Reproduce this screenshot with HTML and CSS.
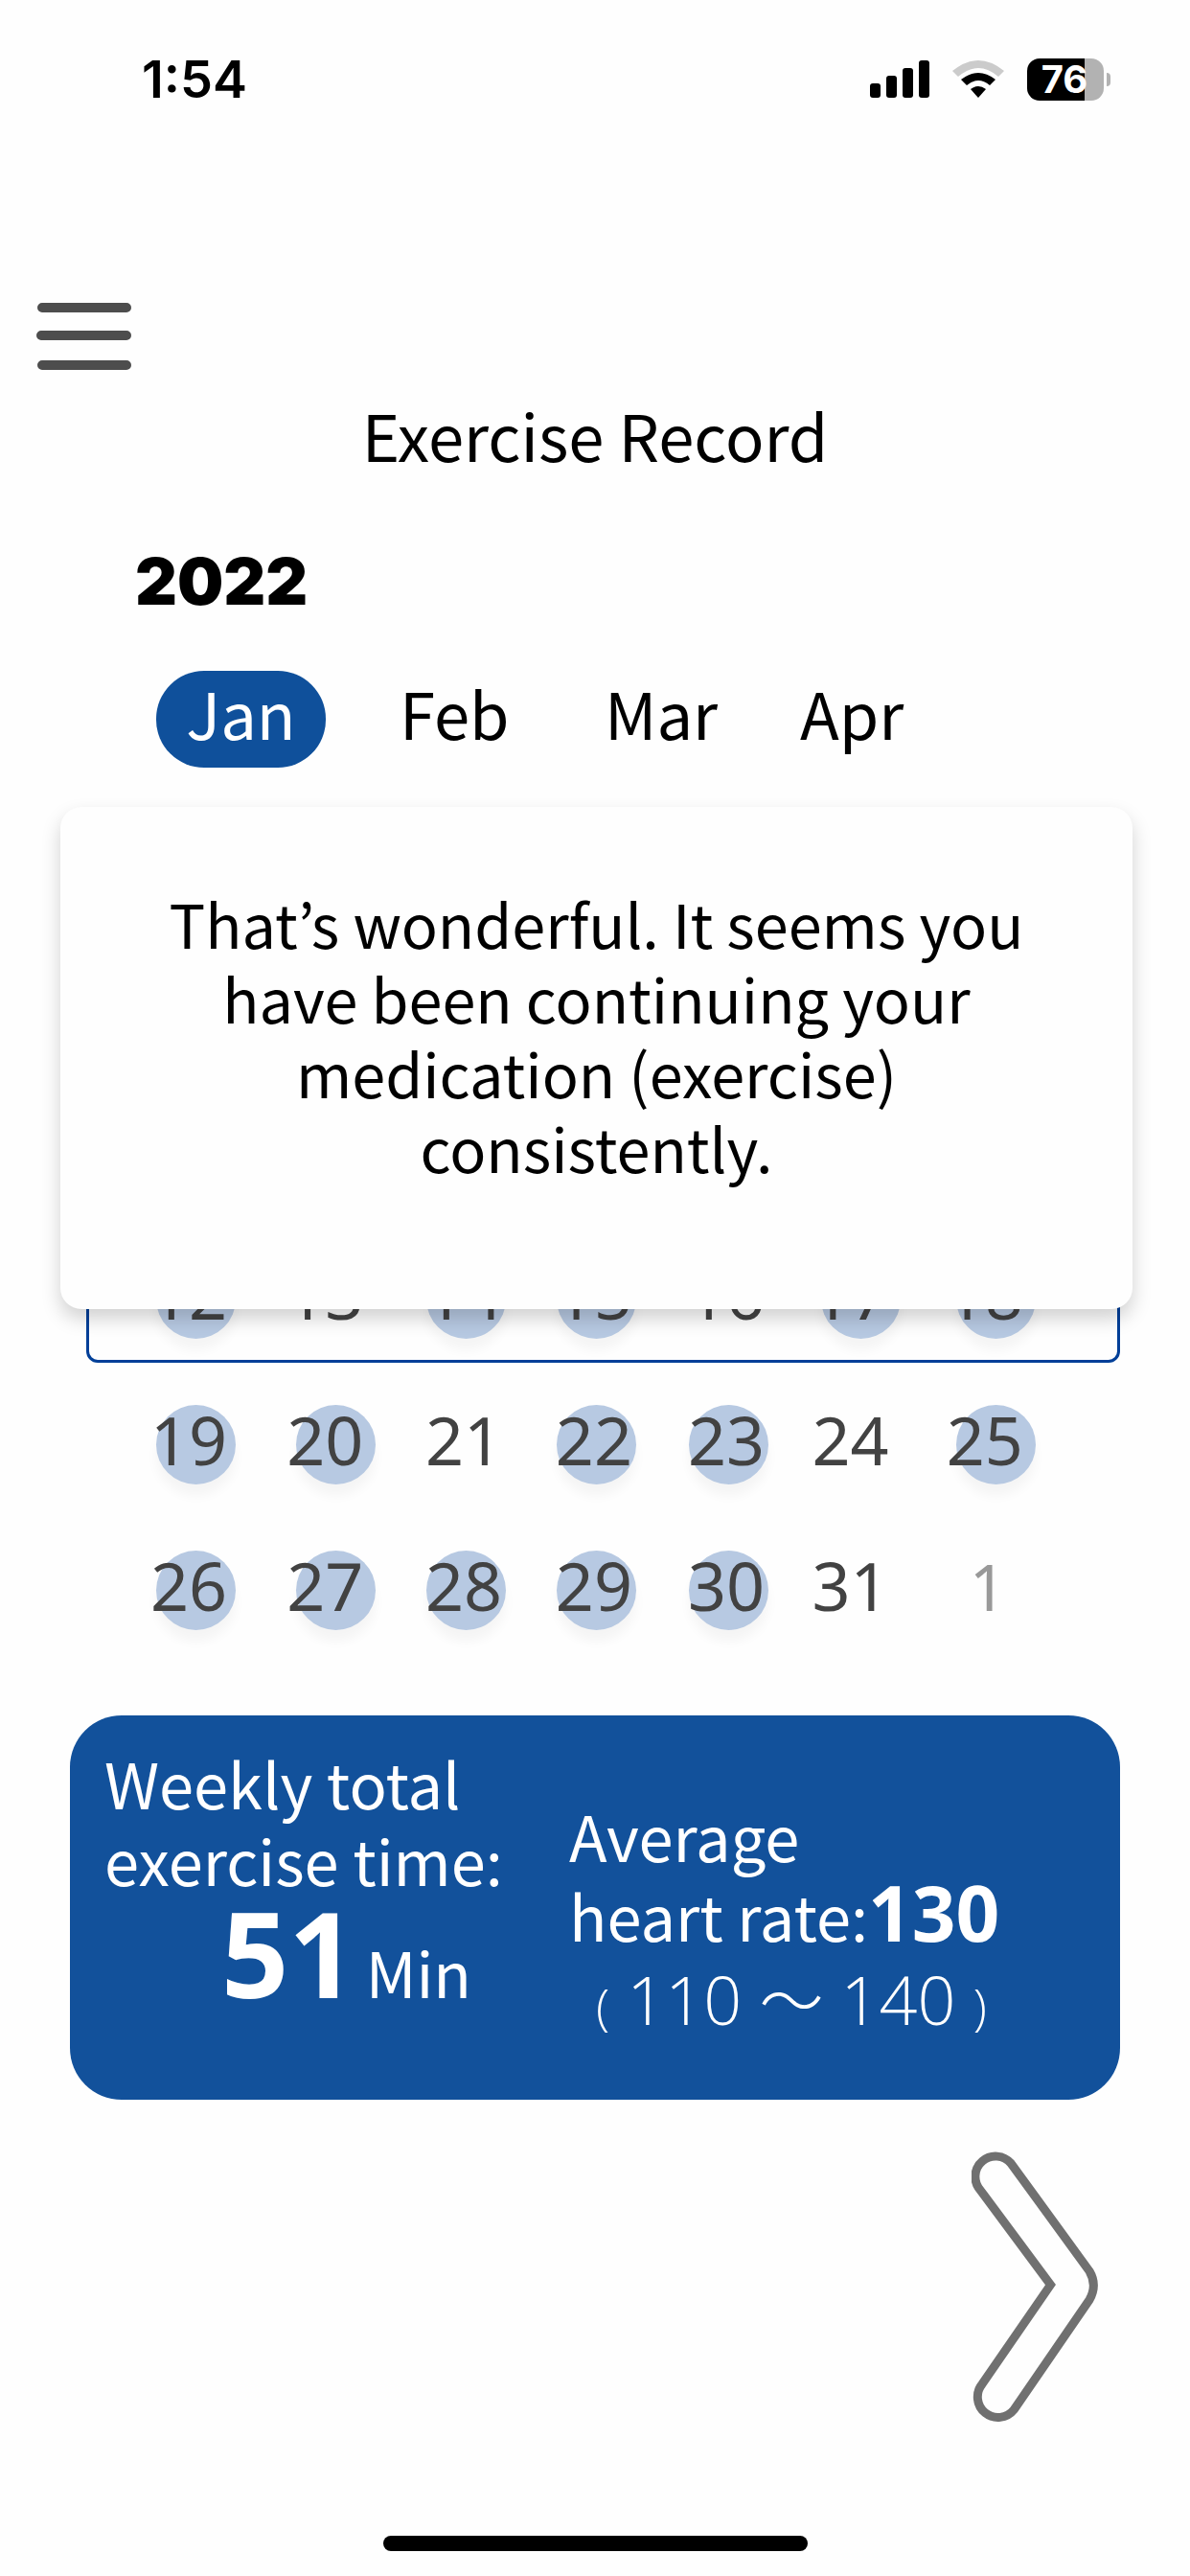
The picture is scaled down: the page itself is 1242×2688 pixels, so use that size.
FILE: index.html
```
<!DOCTYPE html>
<html lang="en">
<head>
  <meta charset="UTF-8" />
  <meta name="viewport" content="width=device-width, initial-scale=1.0"/>
  <title>Exercise Record</title>
  <link rel="stylesheet" href="styles.css">
</head>
<body>
  <div class="status-bar">
    <span class="time">1:54</span>
    <div class="status-icons">
      <svg class="signal" width="62" height="40" viewBox="0 0 62 40">
        <rect x="0" y="24" width="11" height="15" rx="3"/>
        <rect x="17" y="16" width="11" height="23" rx="3"/>
        <rect x="34" y="8" width="11" height="31" rx="3"/>
        <rect x="51" y="0" width="11" height="39" rx="3"/>
      </svg>
      <svg class="wifi" width="54" height="40" viewBox="0 0 54 40">
        <path d="M0 11 Q27 -11 54 11 L48 17 Q27 -1 6 17 Z" fill="#cbcbcb"/>
        <path d="M9 20 Q27 6 45 20 L39 26 Q27 16 15 26 Z"/>
        <path d="M19 30 Q27 24 35 30 L27 39 Z"/>
      </svg>
      <div class="battery"><span>76</span></div>
    </div>
  </div>

  <header>
    <button class="menu" aria-label="Menu">
      <svg width="100" height="72" viewBox="0 0 100 72">
        <path d="M6 6 H94 M5 35 H94 M6 66 H94" stroke="#4d4d4d" stroke-width="10" stroke-linecap="round"/>
      </svg>
    </button>
    <h1>Exercise Record</h1>
  </header>

  <h2 class="year">2022</h2>
  <nav class="months">
    <button class="month active">Jan</button>
    <button class="month">Feb</button>
    <button class="month">Mar</button>
    <button class="month">Apr</button>
  </nav>

  <section class="calendar">
    <table>
      <colgroup>
        <col class="c1"><col class="c2"><col class="c3"><col class="c4"><col class="c5"><col class="c6"><col>
      </colgroup>
      <tr class="current">
        <td><span class="done">12</span></td>
        <td><span>13</span></td>
        <td><span class="done">14</span></td>
        <td><span class="done">15</span></td>
        <td><span>16</span></td>
        <td><span class="done wide">17</span></td>
        <td><span class="done wide">18</span></td>
      </tr>
      <tr>
        <td><span class="done">19</span></td>
        <td><span class="done wide">20</span></td>
        <td><span>21</span></td>
        <td><span class="done">22</span></td>
        <td><span class="done">23</span></td>
        <td><span>24</span></td>
        <td><span class="done wide">25</span></td>
      </tr>
      <tr>
        <td><span class="done">26</span></td>
        <td><span class="done wide">27</span></td>
        <td><span class="done">28</span></td>
        <td><span class="done">29</span></td>
        <td><span class="done">30</span></td>
        <td><span>31</span></td>
        <td><span class="next">1</span></td>
      </tr>
    </table>

    <!-- message over the calendar -->
    <div class="message" role="dialog">
      <p>That’s wonderful. It seems you have been continuing your medication (exercise) consistently.</p>
    </div>
  </section>

  <section class="summary">
    <div class="total">
      <p>Weekly total<br>exercise time:</p>
      <p class="minutes"><b>51</b> <span>Min</span></p>
    </div>
    <div class="heart">
      <p>Average<br>heart rate:<b>130</b></p>
      <p class="range"><small>(</small> 110 <span>～</span> 140 <small>)</small></p>
    </div>
  </section>

  <button class="forward" aria-label="Next">
    <svg width="133" height="287" viewBox="100 70 400 860">
      <path d="M127 195 L348 493 L133 805 A64 64 0 0 0 233 885 L470 540 Q496 494 470 450 L224 112 A62 62 0 0 0 127 195 Z" fill="none" stroke="#707070" stroke-width="27"/>
    </svg>
  </button>

  <div class="home-bar"></div>
</body>
</html>
```

FILE: styles.css
```
* {
  box-sizing: border-box;
}
body {
  display: flex;
  flex-direction: column;
  min-height: 100vh;
  margin: 0;
  background: #fefefe;
  color: #000;
  font-family: "Noto Sans CJK JP", "Noto Sans", sans-serif;
  font-size: 67px;
  line-height: 80px;
}
h1, h2, p {
  margin: 0;
}
button {
  padding: 0;
  border: none;
  background: none;
  color: inherit;
  font: inherit;
  cursor: pointer;
}
svg {
  display: block;
}

/* status bar */
.status-bar {
  display: flex;
  justify-content: space-between;
  align-items: center;
  height: 165px;
  padding: 0 90px 0 148px;
  font-family: Inter, "Liberation Sans", sans-serif;
  font-weight: 600;
}
.time {
  font-size: 54px;
}
.status-icons {
  display: flex;
  align-items: center;
  gap: 24px;
}
.battery {
  position: relative;
  width: 80px;
  height: 44px;
  padding-right: 2px;
  border-radius: 13px;
  background: linear-gradient(to right, #000 60px, #b2b2b2 60px);
  color: #fff;
  font-size: 40px;
  font-weight: 700;
  line-height: 44px;
  text-align: center;
}
.battery::after {
  content: "";
  position: absolute;
  top: 15px;
  right: -7px;
  width: 4px;
  height: 14px;
  border-radius: 0 4px 4px 0;
  background: #b2b2b2;
}

/* title */
header {
  padding: 150px 38px 0;
}
.menu {
  display: block;
}
h1 {
  margin-top: 26px;
  font-size: 67px;
  font-weight: 400;
  text-align: center;
}
.year {
  margin: 80px 0 0 141px;
  font-family: Inter, "Liberation Sans", sans-serif;
  font-size: 68px;
  font-weight: 900;
  line-height: 66px;
}

/* months */
.months {
  display: grid;
  grid-template-columns: 218px 214px 204px auto;
  justify-items: start;
  margin: 61px 0 0 163px;
}
.month {
  height: 101px;
  padding: 0 36px 16px;
}
.active {
  width: 177px;
  padding: 0 0 16px;
  border-radius: 50px;
  background: #0f509b;
  color: #fff;
}

/* calendar */
.calendar {
  position: relative;
  margin-top: 41px;
  padding: 432px 73px 0 90px;
}
.calendar table {
  width: 100%;
  border-collapse: collapse;
  table-layout: fixed;
  color: #424242;
  font-family: "Noto Sans", sans-serif;
  font-size: 70px;
}
.calendar tr {
  position: relative;
  height: 152px;
}
.calendar td {
  padding: 0;
}
.calendar td:first-child {
  padding-left: 67px;
}
.c1 { width: 19.4%; }
.c2 { width: 13.4%; }
.c3 { width: 12.6%; }
.c4 { width: 12.8%; }
.c5 { width: 12%; }
.c6 { width: 13%; }
.current::after {
  content: "";
  position: absolute;
  inset: 0 0 4px;
  border: 3px solid #003f98;
  border-radius: 12px;
}
.calendar span {
  position: relative;
  z-index: 0;
}
.done::before {
  content: "";
  position: absolute;
  z-index: -1;
  top: 12px;
  left: 1px;
  width: 83px;
  height: 83px;
  border-radius: 50%;
  background: #b7c9e2;
  box-shadow: 0 12px 12px rgba(0, 0, 0, 0.04);
}
td:first-child .done::before {
  left: 6px;
}
.wide::before {
  left: 10px;
}
.calendar .next {
  padding-left: 24px;
  color: #999;
  font-size: 67px;
}
.message {
  position: absolute;
  z-index: 1;
  top: 0;
  left: 63px;
  right: 60px;
  height: 524px;
  padding: 82px 100px 0;
  border-radius: 22px;
  background: #fefefe;
  box-shadow: 0 10px 20px rgba(0, 0, 0, 0.18);
  font-size: 63px;
  line-height: 78px;
  text-align: center;
}

/* weekly numbers */
.summary {
  display: grid;
  grid-template-columns: 485px auto;
  margin: 60px 73px 0;
  padding: 30px 36px 50px;
  border-radius: 54px;
  background: #12519b;
  color: #fff;
  font-size: 65px;
}
.summary b {
  font-family: "Open Sans", "Noto Sans", sans-serif;
  font-weight: 700;
}
.minutes {
  display: flex;
  align-items: baseline;
  gap: 10px;
  padding-left: 122px;
  line-height: 116px;
}
.minutes b {
  font-size: 123px;
}
.heart {
  padding-top: 55px;
}
.heart b {
  font-size: 80px;
}
.range {
  padding-left: 28px;
  font-family: "Open Sans", "Noto Sans CJK JP", sans-serif;
  font-size: 70px;
  font-weight: 300;
  line-height: 96px;
}
.range small {
  font-size: 52px;
}
.range span {
  font-size: 67px;
}

.forward {
  align-self: flex-end;
  margin: 52px 95px 0 0;
}
.home-bar {
  width: 443px;
  height: 16px;
  margin: auto auto 26px;
  border-radius: 8px;
  background: #000;
}
```
